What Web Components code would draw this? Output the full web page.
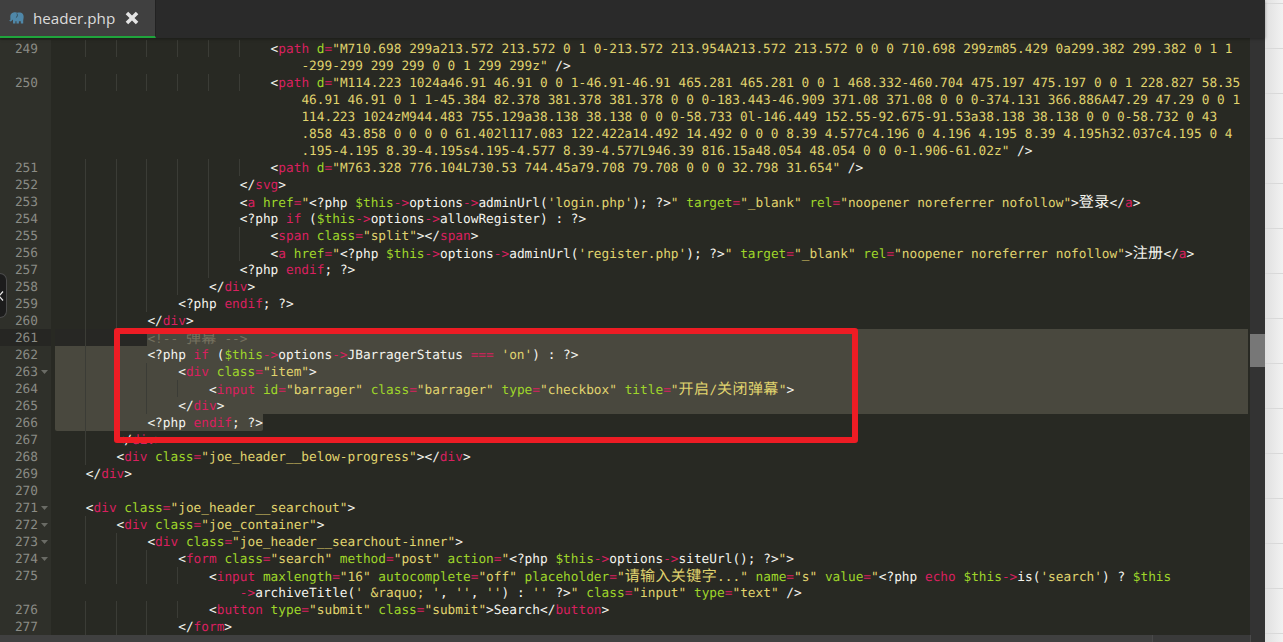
<!DOCTYPE html>
<html>
<head>
<meta charset="utf-8">
<title>header.php</title>
<style>
  html, body { margin: 0; height: 100%; overflow: hidden; background: #e8e8e8; }
</style>
</head>
<body>
<editor-window>
  <editor-tab slot="tabs">header.php</editor-tab>
  <code-pane slot="pane"></code-pane>
  <gutter-handle slot="overlay"></gutter-handle>
  <red-frame slot="overlay"></red-frame>
</editor-window>

<script>
const GUIDES = [30, 61, 91, 122, 153, 184, 215];
const CHAR = 7.7;

// [line number, indent, source, selection]
const LINES = [
  [249, 28, `<path d="M710.698 299a213.572 213.572 0 1 0-213.572 213.954A213.572 213.572 0 0 0 710.698 299zm85.429 0a299.382 299.382 0 1 1`],
  [0, 32, `-299-299 299 299 0 0 1 299 299z" />`],
  [250, 28, `<path d="M114.223 1024a46.91 46.91 0 0 1-46.91-46.91 465.281 465.281 0 0 1 468.332-460.704 475.197 475.197 0 0 1 228.827 58.35`],
  [0, 32, `46.91 46.91 0 1 1-45.384 82.378 381.378 381.378 0 0 0-183.443-46.909 371.08 371.08 0 0 0-374.131 366.886A47.29 47.29 0 0 1`],
  [0, 32, `114.223 1024zM944.483 755.129a38.138 38.138 0 0 0-58.733 0l-146.449 152.55-92.675-91.53a38.138 38.138 0 0 0-58.732 0 43`],
  [0, 32, `.858 43.858 0 0 0 0 61.402l117.083 122.422a14.492 14.492 0 0 0 8.39 4.577c4.196 0 4.196 4.195 8.39 4.195h32.037c4.195 0 4`],
  [0, 32, `.195-4.195 8.39-4.195s4.195-4.577 8.39-4.577L946.39 816.15a48.054 48.054 0 0 0-1.906-61.02z" />`],
  [251, 28, `<path d="M763.328 776.104L730.53 744.45a79.708 79.708 0 0 0 32.798 31.654" />`],
  [252, 24, `</svg>`],
  [253, 24, `<a href="<?php $this->options->adminUrl('login.php'); ?>" target="_blank" rel="noopener noreferrer nofollow">登录</a>`],
  [254, 24, `<?php if ($this->options->allowRegister) : ?>`],
  [255, 28, `<span class="split"></span>`],
  [256, 28, `<a href="<?php $this->options->adminUrl('register.php'); ?>" target="_blank" rel="noopener noreferrer nofollow">注册</a>`],
  [257, 24, `<?php endif; ?>`],
  [258, 20, `</div>`],
  [259, 16, `<?php endif; ?>`],
  [260, 12, `</div>`],
  [261, 12, `<!-- 弹幕 -->`, "from"],
  [262, 12, `<?php if ($this->options->JBarragerStatus === 'on') : ?>`, "full"],
  [263, 16, `<div class="item">`, "full"],
  [264, 20, `<input id="barrager" class="barrager" type="checkbox" title="开启/关闭弹幕">`, "full"],
  [265, 16, `</div>`, "full"],
  [266, 12, `<?php endif; ?>`, "fit"],
  [267, 8, `</div>`],
  [268, 8, `<div class="joe_header__below-progress"></div>`],
  [269, 4, `</div>`],
  [270, 0, ``],
  [271, 4, `<div class="joe_header__searchout">`],
  [272, 8, `<div class="joe_container">`],
  [273, 12, `<div class="joe_header__searchout-inner">`],
  [274, 16, `<form class="search" method="post" action="<?php $this->options->siteUrl(); ?>">`],
  [275, 20, `<input maxlength="16" autocomplete="off" placeholder="请输入关键字..." name="s" value="<?php echo $this->is('search') ? $this`],
  [0, 24, `->archiveTitle(' &raquo; ', '', '') : '' ?>" class="input" type="text" />`, "", "php"],
  [276, 20, `<button type="submit" class="submit">Search</button>`],
  [277, 16, `</form>`]
];

const FOLDS = [263, 271, 272, 273, 274];

// small php/html highlighter, good enough for these lines
function highlight(src, mode) {
  const out = [];
  let i = 0;
  let str = mode === "string";
  let php = mode === "php";
  const push = (cls, text) => { out.push([cls, text]); i += text.length; };
  while (i < src.length) {
    const rest = src.slice(i);
    let m;
    if (php) {
      if (rest.startsWith("?>")) { push("w", "?>"); php = false; str = mode === "php" || str; }
      else if ((m = rest.match(/^\$this/))) push("g", m[0]);
      else if ((m = rest.match(/^(->|===)/))) push("p", m[0]);
      else if ((m = rest.match(/^'[^']*'/))) push("y", m[0]);
      else if ((m = rest.match(/^(if|endif|echo)\b/))) push("p", m[0]);
      else if ((m = rest.match(/^\w+/))) push("w", m[0]);
      else push("w", rest[0]);
    } else if (str) {
      if (rest.startsWith("<?php")) { push("w", "<?php"); php = true; }
      else if (rest[0] === '"') { push("y", '"'); str = false; }
      else if ((m = rest.match(/^[^"<]+/))) push("y", m[0]);
      else push("y", rest[0]);
    } else {
      if ((m = rest.match(/^<!--.*-->/))) push("c", m[0]);
      else if (rest.startsWith("<?php")) { push("w", "<?php"); php = true; }
      else if ((m = rest.match(/^(<\/?)(\w+)/))) { push("w", m[1]); push("p", m[2]); }
      else if ((m = rest.match(/^([\w-]+)=/))) { push("g", m[1]); push("p", "="); }
      else if (rest[0] === '"') { push("y", '"'); str = true; }
      else if ((m = rest.match(/^\w+/))) push("w", m[0]);
      else push("w", rest[0]);
    }
  }
  return { tokens: out, mode: php ? "php" : str ? "string" : "html" };
}

function escapeHtml(s) {
  return s.replace(/&/g, "&amp;").replace(/</g, "&lt;").replace(/>/g, "&gt;");
}

function tokensToHtml(tokens) {
  return tokens.map(([cls, text]) => {
    const inner = escapeHtml(text).replace(/[\u4e00-\u9fff]+/g, c => `<span class="cjk">${c}</span>`);
    return `<span class="${cls}">${inner}</span>`;
  }).join("");
}

class EditorWindow extends HTMLElement {
  constructor() {
    super();
    this.attachShadow({ mode: "open" });
    this.shadowRoot.innerHTML = `
      <style>
        :host { display: flex; width: 1283px; height: 642px; position: relative; overflow: hidden; }
        .main { width: 1265px; display: flex; flex-direction: column; background: #282923; }
        .tabs { height: 38px; flex: none; background: #2a2a2a; display: flex; position: relative; z-index: 1;
                box-shadow: 0 1px 3px rgba(0, 0, 0, .35); }
        .middle { flex: 1; display: flex; min-height: 0; }
        .pane { flex: 1; min-width: 0; }
        .vbar { width: 15px; background: #333333; position: relative; }
        .thumb { position: absolute; left: 0; right: 0; top: 296px; height: 33px; background: #777777; }
        .hbar { height: 7px; flex: none; display: flex; background: #3e3e3e; }
        .hbar i { display: block; }
        .hbar .track { width: 1153px; background: #404040; border-right: 1px solid #4a4a4a; box-sizing: border-box; }
        .hbar .rest { flex: 1; background: #3a3a3a; }
        .hbar .corner { width: 15px; background: #333333; border-left: 1px solid #4a4a4a; box-sizing: border-box; }
        .side { width: 18px; flex: none;
                background:
                  repeating-linear-gradient(to bottom, transparent 0 3px, #d9d9d9 3px 4px, transparent 4px 45px),
                  linear-gradient(to right, #e0e0e0, #f2f2f2); }
      </style>
      <div class="main">
        <div class="tabs"><slot name="tabs"></slot></div>
        <div class="middle">
          <div class="pane"><slot name="pane"></slot></div>
          <div class="vbar"><div class="thumb"></div></div>
        </div>
        <div class="hbar"><i class="track"></i><i class="rest"></i><i class="corner"></i></div>
      </div>
      <div class="side"></div>
      <slot name="overlay"></slot>
    `;
  }
}

class EditorTab extends HTMLElement {
  constructor() {
    super();
    this.attachShadow({ mode: "open" });
    this.shadowRoot.innerHTML = `
      <style>
        :host { display: flex; align-items: center; box-sizing: border-box; width: 156px; height: 38px;
                background: #404040; border-right: 1px solid #222; border-bottom: 2px solid #1fa53c;
                font: 15.2px "Open Sans", sans-serif; color: #dcdcdc; }
        .elephant { width: 15px; height: 12px; margin-left: 9px; flex: none; }
        .name { margin-left: 9px; width: 84px; white-space: nowrap; }
        .close { width: 14px; height: 14px; margin-left: 8px; flex: none; }
      </style>
      <svg class="elephant" viewBox="0 0 15 12">
        <path fill="#4f87a8" d="M4.4.6C6 0 7.4.2 8.4.8 10 .2 12.600.4 13.800 2c.9 1.200 1 3 .7 4.600-.1.800-.3 1.500-.3 2.300V11.500h-2.400V9.300H9.900v2.200H7.500V9.200H6.400v2.300H4V8.600C3.700 8.300 3.500 8 3.300 7.600 3 8.300 2.900 9 2.100 9.300 1.100 9.600.3 9 .4 8.100 1.300 8.400 1.400 7.700 1.400 6.900 1.400 5 1 3.400 2.100 2 2.700 1.300 3.500.8 4.400.6z"/>
        <path fill="none" stroke="#2f3f48" stroke-width=".8" d="M7.900 1.500c.9 1.400.6 3.300-1 4.200"/>
      </svg>
      <span class="name"><slot></slot></span>
      <svg class="close" viewBox="0 0 14 14">
        <path fill="#e4e4e4" d="M3.200.7 7 4.500 10.800.7 13.300 3.200 9.500 7 13.300 10.800 10.800 13.300 7 9.500 3.200 13.300.7 10.800 4.500 7 .7 3.200z"/>
      </svg>
    `;
  }
}

class CodeLine extends HTMLElement {
  constructor() {
    super();
    this.attachShadow({ mode: "open" });
  }

  get styles() {
    return `
      :host { display: flex; height: 17px; white-space: pre;
              font: 12.79px/17px "DejaVu Sans Mono", monospace; text-rendering: geometricPrecision; }
      .num { width: 51px; height: 17px; flex: none; box-sizing: border-box; padding-top: 1px; display: flex; background: #2f302a; color: #8b8c86; }
      .num b { font-weight: normal; width: 38px; text-align: right; }
      .num svg { margin: 6px 0 0 3px; }
      :host([current]) .num { background: #262623; }
      .body { flex: 1; height: 17px; min-width: 0; margin: 0 2px 0 4px; display: flex; }
      :host([current]) .body { background: #272724; }
      .indent { flex: none; height: 17px; background-repeat: no-repeat; }
      .text { flex: 1; height: 17px; box-sizing: border-box; padding-top: 1px; color: #f8f8f2; }
      :host([sel="full"]) .body { background: #49483e; }
      :host([sel="from"]) .text { background: #49483e; border-top-left-radius: 2px; }
      :host([sel="fit"]) .body { flex: none; background: #49483e; border-radius: 0 0 2px 2px; }
      :host([sel="fit"]) .text { flex: none; }
      .w { color: #f4f4ee; }
      .p { color: #d8205f; }
      .g { color: #9fd62a; }
      .y { color: #e0d46e; }
      .c { color: #75715e; }
      .cjk { font: 15px/16px "Noto Sans CJK SC", sans-serif; letter-spacing: .4px; }
    `;
  }

  render(n, indent, html) {
    const count = Math.floor(indent / 4) - 1;
    const guides = n && count > 0 ? GUIDES.slice(0, count) : [];
    const bg = guides.map(x => `linear-gradient(#3b3c36, #3b3c36) ${x}px 0 / 1px 100%`).join(",");
    const fold = FOLDS.includes(n)
      ? `<svg width="7" height="4" viewBox="0 0 7 4"><path fill="#6a6b65" d="M0 0h7L3.500 4z"/></svg>` : "";
    this.shadowRoot.innerHTML = `
      <style>${this.styles}</style>
      <div class="num"><b>${n || ""}</b>${fold}</div>
      <div class="body">
        <span class="indent" style="width:${indent * CHAR}px;${bg ? `background:${bg};background-repeat:no-repeat` : ""}"></span><span class="text">${html}</span>
      </div>
    `;
  }
}

class CodePane extends HTMLElement {
  constructor() {
    super();
    this.attachShadow({ mode: "open" });
    this.shadowRoot.innerHTML = `
      <style>
        :host { display: block; height: 100%; box-sizing: border-box; padding-top: 2px; background: #282923; overflow: hidden; }
      </style>
      <slot></slot>
    `;
  }

  connectedCallback() {
    let mode = "html";
    for (const [n, indent, src, sel, force] of LINES) {
      const res = highlight(src, force || mode);
      mode = res.mode;
      const line = document.createElement("code-line");
      if (sel) line.setAttribute("sel", sel);
      if (n === 261) line.setAttribute("current", "");
      this.appendChild(line);
      line.render(n, indent, tokensToHtml(res.tokens));
    }
  }
}

// little dark pull handle on the window's left edge
class GutterHandle extends HTMLElement {
  constructor() {
    super();
    this.attachShadow({ mode: "open" });
    this.shadowRoot.innerHTML = `
      <style>
        :host { position: absolute; left: 0; top: 273px; width: 7px; height: 45px; box-sizing: border-box;
                background: #1c1c1c; border: 1px solid #4c4c4c; border-left: 0; border-radius: 0 7px 7px 0; }
        svg { display: block; margin-top: 16px; }
      </style>
      <svg width="5" height="12" viewBox="0 0 5 12">
        <path fill="none" stroke="#e8e8e8" stroke-width="1.300" d="M3 1.500-1 6l4 4.500"/>
      </svg>
    `;
  }
}

class RedFrame extends HTMLElement {
  constructor() {
    super();
    this.attachShadow({ mode: "open" });
    this.shadowRoot.innerHTML = `
      <style>
        :host { position: absolute; left: 114px; top: 328px; width: 744px; height: 115px; box-sizing: border-box;
                border: 6px solid #ed1c24; border-radius: 3px; pointer-events: none; }
      </style>
    `;
  }
}

customElements.define("editor-window", EditorWindow);
customElements.define("editor-tab", EditorTab);
customElements.define("code-line", CodeLine);
customElements.define("code-pane", CodePane);
customElements.define("gutter-handle", GutterHandle);
customElements.define("red-frame", RedFrame);
</script>
</body>
</html>
